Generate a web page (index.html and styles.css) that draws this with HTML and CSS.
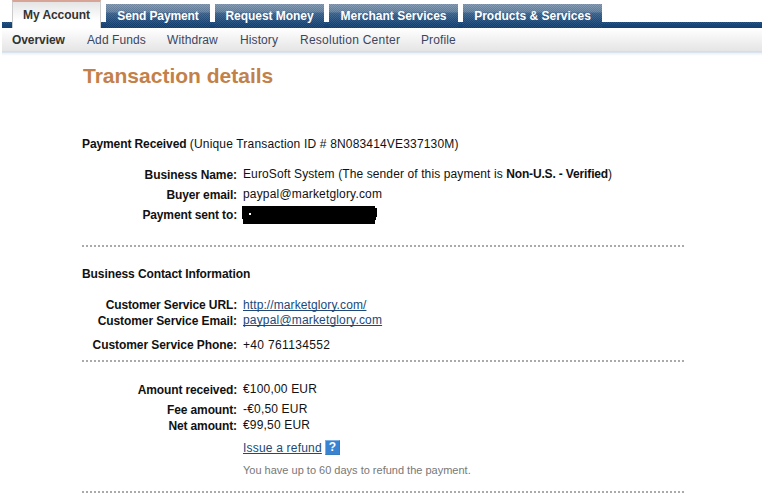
FILE: index.html
```
<!DOCTYPE html>
<html lang="en">
<head>
<meta charset="utf-8">
<title>Transaction details</title>
<link rel="stylesheet" href="styles.css">
</head>
<body>
<header class="header">
  <nav class="tabs">
    <a class="tab tab-active">My Account</a>
    <a class="tab tab-send">Send Payment</a>
    <a class="tab tab-request">Request Money</a>
    <a class="tab tab-merchant">Merchant Services</a>
    <a class="tab tab-products">Products &amp; Services</a>
  </nav>
  <nav class="subnav">
    <a class="sub sub-overview">Overview</a>
    <a class="sub sub-add">Add Funds</a>
    <a class="sub sub-withdraw">Withdraw</a>
    <a class="sub sub-history">History</a>
    <a class="sub sub-resolution">Resolution Center</a>
    <a class="sub">Profile</a>
  </nav>
</header>
<main class="content">
  <h1>Transaction details</h1>
  <section class="payment">
    <p class="lead"><b>Payment Received</b> <span class="txn">(Unique Transaction ID # 8N083414VE337130M)</span></p>
    <div class="row row-business"><span class="label l-business">Business Name:</span><span class="value raised"><span class="sender">EuroSoft System (The sender of this payment is</span> <b class="verified">Non-U.S. - Verified</b>)</span></div>
    <div class="row row-spaced"><span class="label">Buyer email:</span><span class="value raised email">paypal@marketglory.com</span></div>
    <div class="row row-spaced"><span class="label">Payment sent to:</span><svg class="redaction" width="135" height="18" viewBox="0 0 135 18"><path d="M0 0H133V2H135V11H134V14H133V18H1V13H0Z"/><path fill="#fff" d="M7 7h2v2h-2z"/></svg></div>
  </section>
  <section class="contact">
    <h2>Business Contact Information</h2>
    <div class="row"><span class="label l-url">Customer Service URL:</span><a class="value link url">http://marketglory.com/</a></div>
    <div class="row"><span class="label l-email">Customer Service Email:</span><a class="value link raised email">paypal@marketglory.com</a></div>
    <div class="row row-phone"><span class="label l-phone">Customer Service Phone:</span><span class="value phone">+40 761134552</span></div>
  </section>
  <section class="amounts">
    <div class="row"><span class="label">Amount received:</span><span class="value raised money">€100,00 EUR</span></div>
    <div class="row row-spaced"><span class="label">Fee amount:</span><span class="value raised money">-€0,50 EUR</span></div>
    <div class="row"><span class="label">Net amount:</span><span class="value raised money">€99,50 EUR</span></div>
    <div class="row row-refund"><a class="link refund">Issue a refund</a><span class="help">?</span></div>
    <p class="note">You have up to 60 days to refund the payment.</p>
  </section>
</main>
</body>
</html>
```
FILE: styles.css
```
* { box-sizing: border-box; }
body {
  margin: 0;
  height: 498px;
  overflow: hidden;
  background: #fff;
  color: #111;
  font: 12px/16px "Liberation Sans", Arial, sans-serif;
}
h1, h2, p { margin: 0; }
.header { width: 760px; margin-left: 2px; }
.tabs {
  display: flex;
  align-items: flex-start;
  gap: 5px;
  height: 28px;
  padding-left: 10px;
  background: conic-gradient(#ffffff12 25%, #00103018 0 50%, #ffffff12 0 75%, #00103018 0) 0 22px / 2px 2px repeat-x, linear-gradient(#1b4c80, #15406f) 0 22px / 100% 6px no-repeat;
}
.tab {
  display: block;
  height: 24px;
  margin-top: 4px;
  padding-top: 4px;
  text-align: center;
  white-space: nowrap;
  font-weight: bold;
  letter-spacing: -0.05px;
  color: #fff;
  background: conic-gradient(#ffffff12 25%, #00103018 0 50%, #ffffff12 0 75%, #00103018 0) 0 0 / 2px 2px, linear-gradient(#8299b1 0, #6583a2 8px, #3f668f 9px, #174679 20px, #15406f 24px);
}
.tab-active {
  width: 89px;
  height: 28px;
  margin-top: 0;
  padding-top: 5px;
  border-top: 2px solid #d8a496;
  border-left: 1px solid #ccc;
  border-right: 1px solid #ccc;
  color: #333;
  background: linear-gradient(#e5e5e5, #fff 18px);
}
.tab-send { width: 104px; letter-spacing: -0.1px; }
.tab-request { width: 109px; }
.tab-merchant { width: 129px; letter-spacing: 0; }
.tab-products { width: 139px; letter-spacing: 0; }
.subnav {
  display: flex;
  height: 28px;
  padding: 4px 0 0 10px;
  color: #394762;
  background: linear-gradient(#fff 0, #e5e5e5 23px, #c9d6e3 24px, #e9f1f8 25px, #fff 28px);
}
.sub { white-space: nowrap; width: 81px; letter-spacing: 0.1px; }
.sub-overview { width: 75px; font-weight: bold; color: #333; letter-spacing: -0.08px; }
.sub-add { width: 80px; }
.sub-withdraw { width: 73px; }
.sub-history { width: 60px; }
.sub-resolution { width: 121px; letter-spacing: 0.24px; }
.content { width: 602px; margin-left: 82px; }
h1 { height: 80px; padding: 8px 0 0 1px; font-size: 21px; line-height: 24px; color: #c38149; white-space: nowrap; }
.payment, .contact, .amounts {
  background: repeating-linear-gradient(90deg, #aaa 0 2px, transparent 2px 4px) 0 100% / 100% 2px no-repeat;
}
.payment { height: 111px; }
.contact { height: 115px; padding-top: 19px; }
.amounts { height: 131px; padding-top: 20px; }
.lead b { letter-spacing: -0.1px; }
.txn { letter-spacing: 0.17px; }
.sender { letter-spacing: 0.11px; }
.verified { letter-spacing: -0.15px; }
.email { letter-spacing: 0.17px; }
.url { letter-spacing: 0.1px; }
.phone { letter-spacing: 0.33px; }
.money { letter-spacing: 0.18px; }
.refund { letter-spacing: 0.2px; }
.row { display: flex; height: 16px; white-space: nowrap; }
.row-business { margin-top: 15px; }
.row-spaced { margin-top: 4px; }
.row-phone { margin-top: 8px; }
.label { width: 155px; margin-right: 6px; text-align: right; font-weight: bold; letter-spacing: -0.13px; }
.l-business { letter-spacing: -0.07px; }
.l-email { letter-spacing: -0.09px; }
.l-phone { letter-spacing: -0.07px; }
.raised { margin-top: -1px; }
.redaction { margin: -1px 0 0 -1px; }
h2 { font-size: 12px; line-height: 16px; margin-bottom: 15px; letter-spacing: -0.09px; }
.link { color: #204978; text-decoration: underline; text-decoration-skip-ink: none; }
.row-refund { margin: 6px 0 0 161px; }
.help {
  width: 15px;
  height: 15px;
  margin: 0 0 0 3px;
  border: 1px solid;
  border-color: #7db1e4 #397bbb #397bbb #7db1e4;
  background: #3984d2;
  color: #fff;
  text-align: center;
  font-weight: bold;
  line-height: 13px;
}
.note { margin: 6px 0 0 161px; font-size: 11px; color: #777; white-space: nowrap; }
```
